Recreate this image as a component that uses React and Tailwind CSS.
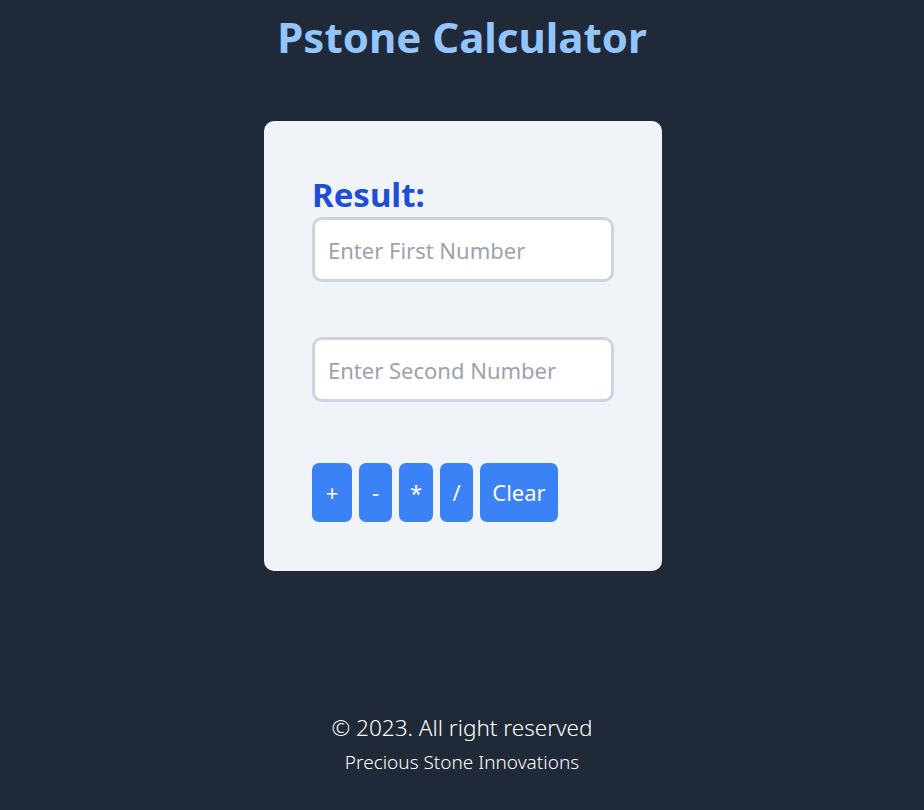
export default function App() {
  return (
    <div className="min-h-screen bg-[#1f2937] flex flex-col items-center font-['Noto_Sans',sans-serif]">
      <h1 className="mt-[11px] text-[42px] leading-[52px] font-bold text-[#93c5fd]">Pstone Calculator</h1>

      {/* Calculator card */}
      <div className="mt-[58px] ml-[2px] w-[398px] h-[450px] rounded-[10px] bg-[#f0f4f8] px-12 pt-[52px]">
        <h2 className="text-[33px] leading-[44px] font-bold text-[#1d4ed8]">Result:</h2>
        <input
          type="text"
          placeholder="Enter First Number"
          className="block w-[302px] h-[65px] rounded-[10px] border-[3px] border-[#cbd5e1] bg-white px-[13px] text-[22px] text-gray-700 placeholder:text-[#9ca3af] outline-none"
        />
        <input
          type="text"
          placeholder="Enter Second Number"
          className="mt-[55px] block w-[302px] h-[65px] rounded-[10px] border-[3px] border-[#cbd5e1] bg-white px-[13px] text-[22px] text-gray-700 placeholder:text-[#9ca3af] outline-none"
        />
        <div className="mt-[61px] flex gap-[7px]">
          <button className="w-[40px] h-[59px] rounded-[7px] bg-[#3b82f6] text-white text-[22px]">+</button>
          <button className="w-[33px] h-[59px] rounded-[7px] bg-[#3b82f6] text-white text-[22px]">-</button>
          <button className="w-[34px] h-[59px] rounded-[7px] bg-[#3b82f6] text-white text-[22px]">*</button>
          <button className="w-[33px] h-[59px] rounded-[7px] bg-[#3b82f6] text-white text-[22px]">/</button>
          <button className="w-[78px] h-[59px] rounded-[7px] bg-[#3b82f6] text-white text-[22px]">Clear</button>
        </div>
      </div>

      <footer className="mt-[141px] flex flex-col items-center text-white">
        <p className="text-[22.5px] leading-[32px] font-light">© 2023. All right reserved</p>
        <p className="mt-[4px] text-[19px] leading-[28px] font-light">Precious Stone Innovations</p>
      </footer>
    </div>
  );
}
